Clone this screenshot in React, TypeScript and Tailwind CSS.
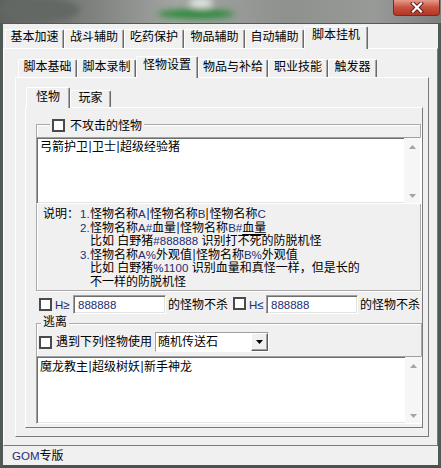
import React from "react";

// Latin runs render in a narrower face with a navy tint (ClearType look)
const L = ({ children }: { children: React.ReactNode }) => (
  <span className="font-['Liberation_Sans'] text-[11.5px] text-[#1e2d72]">{children}</span>
);

const Bar = () => (
  <span className="inline-block w-[2px] h-[12px] mx-[1px] align-[-2px] bg-linear-to-r from-[#e8902e] from-50% to-[#3f7bcc] to-50%" />
);

const Check = () => (
  <span className="inline-block w-[13px] h-[13px] shrink-0 border-2 border-[#4a4a4a] bg-white" />
);

const ScrollBar = () => (
  <div className="w-[16px] h-full bg-[#f6f6f6] flex flex-col items-center justify-between pt-[7px] pb-[5px]">
    <svg width="7" height="4">
      <polygon points="3.5,0 7,4 0,4" fill="#a3a3a3" />
    </svg>
    <svg width="7" height="4">
      <polygon points="0,0 7,0 3.5,4" fill="#a3a3a3" />
    </svg>
  </div>
);

interface TabProps {
  label: string;
  w: string;
  h: string;
  pt: string;
  active?: boolean;
}

const Tab = ({ label, w, h, pt, active }: TabProps) => (
  <div
    className={`${w} ${h} ${pt} shrink-0 bg-[#f0f0f0] border-t border-l border-white border-r border-r-[#6a6a6a] rounded-t-[2px] shadow-[inset_-1px_0_0_#a9a9a9] text-center leading-[12px] text-[12px] ${
      active ? "relative z-10 -mb-[1px]" : ""
    }`}
  >
    {label}
  </div>
);

const Sunken = ({ className, children }: { className: string; children: React.ReactNode }) => (
  <div
    className={`${className} bg-white border border-t-[#a0a0a0] border-l-[#a0a0a0] border-b-white border-r-white shadow-[inset_1px_1px_0_#6e6e6e,inset_-1px_-1px_0_#e3e3e3]`}
  >
    {children}
  </div>
);

export default function App() {
  const mainTabs = [
    { label: "基本加速", w: "w-[59px]" },
    { label: "战斗辅助", w: "w-[60px]" },
    { label: "吃药保护", w: "w-[60px]" },
    { label: "物品辅助", w: "w-[61px]" },
    { label: "自动辅助", w: "w-[59px]" },
  ];

  return (
    <div className="relative w-[441px] h-[468px] overflow-hidden bg-[#7d807c] text-black text-[12px] font-['Liberation_Sans','Noto_Sans_CJK_SC',sans-serif]">
      {/* blurred game backdrop behind the window */}
      <svg width="441" height="23" className="block">
        <defs>
          <linearGradient id="bgx" x1="0" x2="1">
            <stop offset="0" stopColor="#5e625f" />
            <stop offset="0.22" stopColor="#80837f" />
            <stop offset="0.4" stopColor="#a2a5a1" />
            <stop offset="0.65" stopColor="#8e918d" />
            <stop offset="0.85" stopColor="#979a96" />
            <stop offset="1" stopColor="#7c7f7b" />
          </linearGradient>
          <filter id="blur">
            <feGaussianBlur stdDeviation="3" />
          </filter>
        </defs>
        <rect width="441" height="23" fill="url(#bgx)" />
        <g filter="url(#blur)">
          <ellipse cx="196" cy="14" rx="38" ry="5" fill="#2f8a3c" />
          <ellipse cx="201" cy="3" rx="12" ry="5" fill="#e1e5e1" />
          <ellipse cx="40" cy="10" rx="40" ry="12" fill="#646864" />
        </g>
      </svg>

      {/* close button */}
      <div className="absolute top-0 right-[1px] w-[47px] h-[16px] rounded-b-[4px] border border-t-0 border-[#7c2a20] bg-linear-to-b from-[#e59b8b] via-[#c9503e] to-[#b23626] flex items-center justify-center">
        <svg width="14" height="11" viewBox="0 0 14 11">
          <path d="M3 1.5 L11 9.5 M11 1.5 L3 9.5" stroke="#5a1a12" strokeWidth="4" strokeLinecap="square" />
          <path d="M3 1.5 L11 9.5 M11 1.5 L3 9.5" stroke="#ffffff" strokeWidth="2.2" strokeLinecap="square" />
        </svg>
      </div>

      {/* window */}
      <div className="flex flex-col border-t border-t-[#555a57] border-l-[3px] border-r-[3px] border-b-[3px] border-l-[#4f5955] border-r-[#4f5955] border-b-[#48524e] bg-[#f0f0f0]">
        {/* main tabs */}
        <div className="h-[24px] pl-[2px] flex items-end">
          {mainTabs.map((t) => (
            <Tab key={t.label} label={t.label} w={t.w} h="h-[19px]" pt="pt-[1px]" />
          ))}
          <Tab label="脚本挂机" w="w-[64px]" h="h-[23px]" pt="pt-[2px]" active />
        </div>

        {/* main panel */}
        <div className="h-[398px] border-t border-l border-white border-r border-b border-r-[#7a7a7a] border-b-[#7a7a7a] pt-[7px] pl-[11px] pr-[8px]">
          {/* sub tabs */}
          <div className="h-[21px] pl-[3px] flex items-end">
            <Tab label="脚本基础" w="w-[59px]" h="h-[18px]" pt="pt-[1px]" />
            <Tab label="脚本录制" w="w-[59px]" h="h-[18px]" pt="pt-[1px]" />
            <Tab label="怪物设置" w="w-[62px]" h="h-[22px]" pt="pt-[2px]" active />
            <Tab label="物品与补给" w="w-[70px]" h="h-[18px]" pt="pt-[1px]" />
            <Tab label="职业技能" w="w-[60px]" h="h-[18px]" pt="pt-[1px]" />
            <Tab label="触发器" w="w-[49px]" h="h-[18px]" pt="pt-[1px]" />
          </div>

          {/* sub panel */}
          <div className="w-[414px] h-[360px] border-t border-l border-white border-r border-b border-r-[#7a7a7a] border-b-[#7a7a7a] pt-[9px] pl-[9px]">
            {/* third level tabs */}
            <div className="h-[20px] pl-[1px] flex items-end">
              <Tab label="怪物" w="w-[44px]" h="h-[21px]" pt="pt-[3px]" active />
              <Tab label="玩家" w="w-[41px]" h="h-[17px]" pt="pt-[1px]" />
            </div>

            {/* monster panel */}
            <div className="w-[398px] h-[321px] border-t border-l border-white border-r border-b border-r-[#7a7a7a] border-b-[#7a7a7a] flex flex-col">
              {/* group: 不攻击的怪物 */}
              <div className="relative mt-[16px] ml-[10px] w-[385px] h-[167px] border border-[#a9a9a9] shadow-[inset_1px_1px_0_#fff,1px_1px_0_#fff] pt-[12px]">
                <div className="absolute -top-[6px] left-[13px] h-[13px] px-[2px] bg-[#f0f0f0] flex items-center gap-[5px] leading-[12px]">
                  <Check />
                  <span>不攻击的怪物</span>
                </div>

                <Sunken className="-mx-[1px] h-[67px] flex">
                  <div className="flex-1 pl-[3px] pt-[3px] leading-[12px]">
                    弓箭护卫<Bar />卫士<Bar />超级经验猪
                  </div>
                  <ScrollBar />
                </Sunken>

                <div className="mt-[4px] pl-[6px] flex leading-[13.6px]">
                  <div className="w-[37px] shrink-0">说明：</div>
                  <div className="flex flex-col">
                    <div className="flex">
                      <span className="w-[10px]"><L>1.</L></span>
                      <span>
                        怪物名称<L>A</L><Bar />怪物名称<L>B</L><Bar />怪物名称<L>C</L>
                      </span>
                    </div>
                    <div className="flex">
                      <span className="w-[10px]"><L>2.</L></span>
                      <span>
                        怪物名称<L>A#</L>血量<Bar />怪物名称<L>B#</L>
                        <span className="underline underline-offset-2">血量</span>
                      </span>
                    </div>
                    <div className="pl-[10px]">
                      比如 白野猪<L>#888888</L> 识别打不死的防脱机怪
                    </div>
                    <div className="flex">
                      <span className="w-[10px]"><L>3.</L></span>
                      <span>
                        怪物名称<L>A%</L>外观值<Bar />怪物名称<L>B%</L>外观值
                      </span>
                    </div>
                    <div className="pl-[10px]">
                      比如 白野猪<L>%1100</L> 识别血量和真怪一样，但是长的
                    </div>
                    <div className="pl-[10px]">不一样的防脱机怪</div>
                  </div>
                </div>
              </div>

              {/* HP limits */}
              <div className="mt-[4px] h-[19px] pl-[13px] flex items-center leading-[12px]">
                <Check />
                <span className="ml-[3px] w-[16px]"><L>H≥</L></span>
                <Sunken className="ml-[2px] w-[93px] h-[19px] pl-[4px] pt-[3px]">
                  <L>888888</L>
                </Sunken>
                <span className="ml-[2px]">的怪物不杀</span>
                <span className="ml-[5px]"><Check /></span>
                <span className="ml-[3px] w-[16px]"><L>H≤</L></span>
                <Sunken className="ml-[1px] w-[92px] h-[19px] pl-[4px] pt-[3px]">
                  <L>888888</L>
                </Sunken>
                <span className="ml-[2px]">的怪物不杀</span>
              </div>

              {/* group: 逃离 */}
              <div className="relative mt-[9px] ml-[10px] w-[386px] h-[101px] border-t border-l border-r border-[#a9a9a9] shadow-[inset_1px_1px_0_#fff] pt-[8px]">
                <div className="absolute -top-[8px] left-[4px] px-[2px] bg-[#f0f0f0] leading-[12px]">逃离</div>

                <div className="h-[20px] pl-[2px] flex items-center leading-[12px]">
                  <Check />
                  <span className="ml-[4px] w-[96px]">遇到下列怪物使用</span>
                  <div className="ml-[3px] w-[114px] h-[20px] flex bg-white border border-t-[#a0a0a0] border-l-[#a0a0a0] border-b-white border-r-white">
                    <div className="flex-1 pl-[2px] pt-[3px]">随机传送石</div>
                    <div className="w-[17px] h-full bg-[#f0f0f0] border border-t-white border-l-white border-r-[#5e5e5e] border-b-[#5e5e5e] shadow-[inset_-1px_-1px_0_#a0a0a0] flex items-center justify-center">
                      <svg width="7" height="4">
                        <polygon points="0,0 7,0 3.5,4" fill="#000" />
                      </svg>
                    </div>
                  </div>
                </div>

                <Sunken className="-mx-[1px] mt-[4px] h-[68px] flex">
                  <div className="flex-1 pl-[3px] pt-[4px] leading-[12px]">
                    魔龙教主<Bar />超级树妖<Bar />新手神龙
                  </div>
                  <ScrollBar />
                </Sunken>
              </div>
            </div>
          </div>
        </div>

        {/* status bar */}
        <div className="h-[19px] pl-[9px] pt-[4px] leading-[12px]">
          <L>GOM</L>专版
        </div>
      </div>
    </div>
  );
}
